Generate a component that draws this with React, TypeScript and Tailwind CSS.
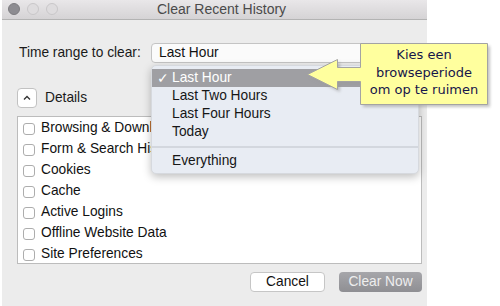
import React from "react";

const rows = [
  "Browsing & Download History",
  "Form & Search History",
  "Cookies",
  "Cache",
  "Active Logins",
  "Offline Website Data",
  "Site Preferences",
];

export default function App() {
  return (
    <div
      className="relative w-[500px] h-[306px] bg-white overflow-hidden"
      style={{ fontFamily: '"Liberation Sans", Arial, sans-serif' }}
    >
      <div className="ml-[2px] w-[425px] h-[306px] bg-[#ececec] flex flex-col">
        {/* Title bar */}
        <div className="relative h-[20px] flex items-center justify-center bg-gradient-to-b from-[#e9e7e9] to-[#d5d3d5] border-b border-[#b3b3b3]">
          <div className="absolute left-[6px] top-[3px] flex gap-[7px]">
            <div className="w-[12px] h-[12px] rounded-full bg-[#8d8c91] border border-[#7d7c80]" />
            <div className="w-[12px] h-[12px] rounded-full bg-[#dedcde] border border-[#c9c7c9]" />
            <div className="w-[12px] h-[12px] rounded-full bg-[#dedcde] border border-[#c9c7c9]" />
          </div>
          <span className="text-[14px] text-[#4a4a4a] pl-[14px]">Clear Recent History</span>
        </div>

        <div className="flex flex-col pl-[15px]">
          {/* Time range row */}
          <div className="mt-[23px] flex items-center h-[20px]">
            <span className="w-[134px] shrink-0 pl-[2px] text-[13.75px] text-[#1a1a1a]">Time range to clear:</span>
            <div className="w-[268px] shrink-0 h-[20px] bg-[#fbfbfb] border border-[#c4c4c4] rounded-[4px] flex items-center pl-[7px] text-[13.75px] text-[#111]">
              Last Hour
            </div>
          </div>

          {/* Details row */}
          <div className="mt-[25px] flex items-center h-[20px]">
            <div className="w-[20px] h-[20px] shrink-0 bg-white border border-[#c2c2c2] rounded-[4px] flex items-center justify-center">
              <svg width="8" height="6" viewBox="0 0 8 6">
                <path d="M1 4.5 L4 1.5 L7 4.5" fill="none" stroke="#333" strokeWidth="1.3" />
              </svg>
            </div>
            <span className="ml-[8px] text-[13.75px] text-[#1a1a1a]">Details</span>
          </div>

          {/* List */}
          <div className="mt-[8px] w-[405px] h-[148px] bg-white border border-[#bcbcbc] pt-[1px] flex flex-col">
            {rows.map((r) => (
              <div key={r} className="h-[21px] shrink-0 flex items-center pl-[5px]">
                <div className="w-[12px] h-[12px] shrink-0 rounded-[3px] border border-[#adadad] bg-white" />
                <span className="ml-[6px] whitespace-nowrap text-[13.75px] text-[#111]">{r}</span>
              </div>
            ))}
          </div>

          {/* Buttons */}
          <div className="mt-[8px] w-[405px] flex justify-end gap-[14px]">
            <div className="w-[75px] h-[20px] bg-white border border-[#c6c6c6] rounded-[4px] flex items-center justify-center text-[13.75px] text-[#111]">
              Cancel
            </div>
            <div className="w-[83px] h-[20px] bg-gradient-to-b from-[#a6a6aa] to-[#8f8f93] rounded-[4px] flex items-center justify-center text-[13.75px] text-[#eeeeee]">
              Clear Now
            </div>
          </div>
        </div>
      </div>

      {/* Dropdown menu */}
      <div className="absolute left-[151px] top-[65px] w-[268px] h-[109px] bg-[#e8ecf3] rounded-[5px] shadow-[0_3px_8px_rgba(0,0,0,0.25)] border border-[#d6d9de] pt-[3px] text-[13.75px] text-[#161616]">
        <div className="h-[18px] bg-[#9f9fa3] text-white flex items-center">
          <span className="w-[20px] pl-[5px] text-[14px]">✓</span>
          <span>Last Hour</span>
        </div>
        <div className="h-[18px] flex items-center pl-[20px]">Last Two Hours</div>
        <div className="h-[18px] flex items-center pl-[20px]">Last Four Hours</div>
        <div className="h-[18px] flex items-center pl-[20px]">Today</div>
        <div className="h-[12px] flex items-center">
          <div className="w-full h-[2px] bg-[#d3d7de]" />
        </div>
        <div className="h-[17px] flex items-center pl-[20px]">Everything</div>
      </div>

      {/* Callout */}
      <div className="absolute left-[300px] top-[36px] w-[200px] h-[80px]">
        <svg width="200" height="80" viewBox="300 36 200 80" className="absolute left-0 top-0">
          <defs>
            <filter id="blur" x="-10%" y="-10%" width="130%" height="130%">
              <feGaussianBlur stdDeviation="1.5" />
            </filter>
          </defs>
          <path
            d="M360 43 L487 43 L487 104 L360 104 L360 81 L337 81 L337 89 L307 74 L337 59 L337 67 L360 67 Z"
            transform="translate(3 3)"
            fill="#9a9a9a"
            opacity="0.6"
            filter="url(#blur)"
          />
          <path
            d="M360.5 43.5 L487.5 43.5 L487.5 104.5 L360.5 104.5 L360.5 81.5 L337.5 81.5 L337.5 89.5 L307.5 74.5 L337.5 59.5 L337.5 67.5 L360.5 67.5 Z"
            fill="#ffff9e"
            stroke="#a3a3a3"
            strokeWidth="1"
          />
        </svg>
        <div
          className="absolute left-[61px] top-[10px] w-[126px] flex flex-col items-center text-[13px] leading-[17.5px] text-[#16164a]"
          style={{ fontFamily: '"DejaVu Sans", Verdana, sans-serif' }}
        >
          <span>Kies een</span>
          <span>browseperiode</span>
          <span>om op te ruimen</span>
        </div>
      </div>
    </div>
  );
}
